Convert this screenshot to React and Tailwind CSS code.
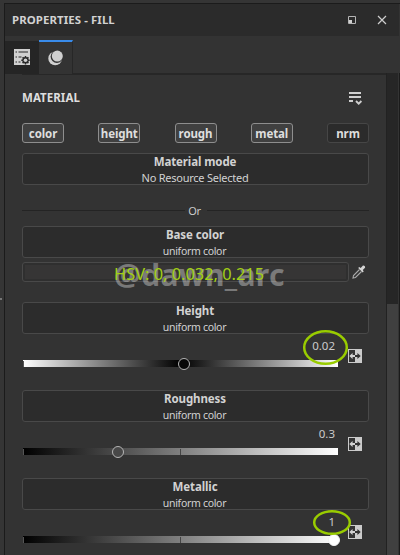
import React from "react";

function Channel({ label, off }) {
  return (
    <div
      className={`flex h-[20px] w-[42px] items-center justify-center rounded-[3px] border pt-px text-[11.5px] font-bold leading-none tracking-[-0.1px] text-[#dedede] ${
        off ? "border-[#464646] bg-[#2b2b2b]" : "border-[#8e8e8e] bg-[#404040]"
      }`}
    >
      {label}
    </div>
  );
}

function ResourceBox({ title, sub, tight }) {
  return (
    <div className="flex h-[32px] w-[347px] flex-col items-center rounded-[3px] border border-[#494949] bg-[#2c2c2c] pr-px text-[#d2d2d2]">
      <div className="h-[15px] whitespace-nowrap text-[11.5px] font-bold leading-[15px] tracking-[-0.1px]">{title}</div>
      <div className={`h-[15px] whitespace-nowrap leading-[18px] ${tight ? "text-[11px] tracking-[-0.25px]" : "pr-px text-[10.5px] tracking-[-0.3px]"}`}>{sub}</div>
    </div>
  );
}

function SwapIcon() {
  return (
    <svg width="14" height="14" viewBox="0 0 14 14" className="block">
      <path d="M0 0h14v14H0z" fill="#cbcbcb" />
      <path d="M1 1h6v12H1z" fill="#343434" />
      <path d="M1.3 7 4.6 4v2H7v2H4.6v2z" fill="#d2d2d2" />
      <path d="M12.7 7 9.4 4v2H7v2h2.4v2z" fill="#303030" />
    </svg>
  );
}

function Knob({ left, tone }) {
  return (
    <div
      className={`absolute top-[-2px] h-[12px] w-[12px] rounded-full border-[1.5px] ${tone}`}
      style={{ left }}
    />
  );
}

function Property({ title, value, gradient, knob, tone, tick, ring }) {
  return (
    <section className="h-[88px]">
      <ResourceBox title={title} sub="uniform color" />
      <div className="flex">
        <div className="relative ml-px w-[315px]">
          <div className="h-[26px] pr-[3px] pt-[4px] text-right text-[11.5px] leading-[16px] text-[#cbcbcb]">
            <span>{value}</span>
          </div>
          <div className={`relative h-[7px] ${gradient}`}>
            <div className="absolute left-0 top-px h-[6px] w-px bg-[#555]" />
            {tick && <div className="absolute left-[157px] top-px h-[6px] w-px bg-[#454545]" />}
            <Knob left={knob} tone={tone} />
          </div>
          {ring && (
            <svg className={`absolute z-10 overflow-visible ${ring.place}`} width={ring.w} height={ring.h}>
              <ellipse cx={ring.w / 2} cy={ring.h / 2} rx={ring.w / 2 - 1.2} ry={ring.h / 2 - 1.2} fill="none" stroke="#99cc00" strokeWidth="2.5" />
            </svg>
          )}
        </div>
        <div className="ml-[10px] pt-[15px]">
          <SwapIcon />
        </div>
      </div>
    </section>
  );
}

function Header() {
  return (
    <header className="flex h-[32px] items-center bg-[#2b2b2b] pl-[7px] pr-[12px]">
      <h1 className="whitespace-nowrap text-[11.4px] font-bold leading-none tracking-[0.1px] text-[#d2d2d2]">PROPERTIES - FILL</h1>
      <div className="flex-1" />
      <svg width="8" height="8" viewBox="0 0 8 8" className="mr-[21px]">
        <path d="M.5.5h7v7h-7z" fill="none" stroke="#b5b5b5" />
        <path d="M1 4h3v3H1z" fill="#d0d0d0" />
      </svg>
      <svg width="10" height="10" viewBox="0 0 10 10">
        <path d="m1 1 8 8M9 1 1 9" stroke="#cecece" strokeWidth="1.2" />
      </svg>
    </header>
  );
}

function Tabs() {
  return (
    <div className="flex h-[39px] items-start pt-[4px]">
      <div className="mt-px flex h-[33px] w-[34px] bg-[#252525] pl-[9px] pt-[8px]">
        <svg width="16" height="16" viewBox="0 0 16 16" className="shrink-0">
          <path d="M0 0h16v16H0z" fill="#d0d0d0" />
          <path d="M1.5 3h1.5M4.5 3H14M1.5 8h1.5M4.5 8h3M1.5 13h1.5M4.5 13h2" stroke="#292929" strokeWidth="1.2" />
          <path d="M11.5 7v8.4M7.3 11.2h8.4M8.6 8.3l5.8 5.8M14.4 8.3l-5.8 5.8" stroke="#292929" strokeWidth="1.5" />
          <circle cx="11.5" cy="11.2" r="3.2" fill="#292929" />
          <circle cx="11.5" cy="11.2" r="1.8" fill="#d0d0d0" />
        </svg>
      </div>
      <div className="flex h-[34px] w-[34px] justify-center border-r border-t-2 border-r-[#272727] border-t-[#398bea] bg-[#333333] pt-[8px]">
        <svg width="16" height="16" viewBox="0 0 16 16" className="shrink-0">
          <circle cx="7.2" cy="8.4" r="6.9" fill="#d0d0d0" />
          <circle cx="8.9" cy="6.6" r="6.3" fill="#333333" />
          <circle cx="9.3" cy="6.1" r="5.5" fill="#d0d0d0" />
        </svg>
      </div>
      <div className="mt-[33px] h-[2px] flex-1 bg-[#272727]" />
    </div>
  );
}

export default function App() {
  return (
    <div className="flex h-[555px] w-[400px] overflow-hidden bg-[#353535] font-['Noto_Sans',sans-serif]">
      <div className="flex w-[4px] flex-col pt-[298px]">
        <div className="h-[2px] w-[2px] bg-[#777]" />
      </div>
      <main className="mt-[3px] flex h-[552px] w-[396px] flex-col border-l border-t border-[#1b1b1b] bg-[#333333]">
        <div className="w-[394px]">
          <Header />
          <Tabs />
        </div>
        <div className="-mt-[2px] flex h-[482px]">
          <div className="w-[381px] pl-[17px]">
            <div className="mt-px h-px w-[347px] bg-[#272727]" />
            <div className="flex h-[48px] items-center justify-between pr-[22px]">
              <h2 className="-mt-[3px] text-[11.5px] font-bold leading-none tracking-[0.05px] text-[#dedede]">MATERIAL</h2>
              <svg width="14" height="13" viewBox="0 0 14 13" className="-mt-[2px] mr-px">
                <path d="M0 1h12M0 5h12M0 9h4" stroke="#d0d0d0" strokeWidth="2" />
                <path d="m7 9 2.7 2.7L12.4 9" fill="none" stroke="#d0d0d0" strokeWidth="1.8" />
              </svg>
            </div>
            <div className="flex w-[347px] justify-between">
              <Channel label="color" />
              <Channel label="height" />
              <Channel label="rough" />
              <Channel label="metal" />
              <Channel label="nrm" off />
            </div>
            <div className="h-[10px]" />
            <ResourceBox title="Material mode" sub="No Resource Selected" tight />
            <div className="flex h-[41px] w-[347px] items-center pt-[10px] text-[11px] leading-none text-[#cbcbcb]">
              <div className="h-px flex-1 bg-[#242424]" />
              <span className="w-[22px] pr-[2px] text-center tracking-[-0.3px]">Or</span>
              <div className="h-px flex-1 bg-[#242424]" />
            </div>
            <ResourceBox title="Base color" sub="uniform color" />
            <div className="relative mt-[4px] flex h-[20px] items-center">
              <div className="h-[20px] w-[327px] rounded-[3px] border border-[#494949] bg-[#2f2f2f] p-[2px]">
                <div className="h-[14px] bg-[#363535]" />
              </div>
              <svg width="14" height="14" viewBox="0 0 14 14" className="ml-[3px]">
                <path d="m7.5 4.5-6 6L1 13l2.5-.5 6-6" fill="none" stroke="#aaa" strokeWidth="1.1" />
                <path d="m6.2 3 1-1 1.5 1 1.8-2c1.3-1.3 3.4.8 2.3 2.1l-2 2 .9 1.5-1 1z" fill="#d5d5d5" />
              </svg>
              <div className="absolute left-[92px] top-[-6px] whitespace-nowrap text-[30px] font-bold leading-[38px] tracking-[0.35px] text-white/35">@dawn_arc</div>
              <div className="absolute left-[92px] top-[-1px] whitespace-nowrap text-[16.4px] leading-[26px] text-[#a2d014]">HSV: 0, 0.032, 0.215</div>
            </div>
            <div className="h-[20px]" />
            <Property
              title="Height"
              value="0.02"
              gradient="bg-[linear-gradient(to_right,#fff,#000_50%,#fff)]"
              knob="155px"
              tone="border-[#b5b5b5] bg-[#080808]"
              ring={{ w: 45, h: 35, place: "left-[280px] top-[-4px]" }}
            />
            <Property
              title="Roughness"
              value="0.3"
              gradient="bg-[linear-gradient(to_right,#000,#fff)]"
              knob="89px"
              tone="border-[#b5b5b5] bg-[#484848]"
              tick
            />
            <Property
              title="Metallic"
              value="1"
              gradient="bg-[linear-gradient(to_right,#000,#fff)]"
              knob="305px"
              tone="border-[#f2f2f2] bg-white"
              tick
              ring={{ w: 38, h: 25, place: "left-[290px] top-[0px]" }}
            />
          </div>
          <div className="h-full w-[12px] border-l border-[#222] bg-[#262626] pt-[231px]">
            <div className="h-[251px] w-full bg-[#404040]" />
          </div>
          <div className="w-px bg-[#343434]" />
          <div className="w-px bg-[#1b1b1b]" />
        </div>
      </main>
    </div>
  );
}
